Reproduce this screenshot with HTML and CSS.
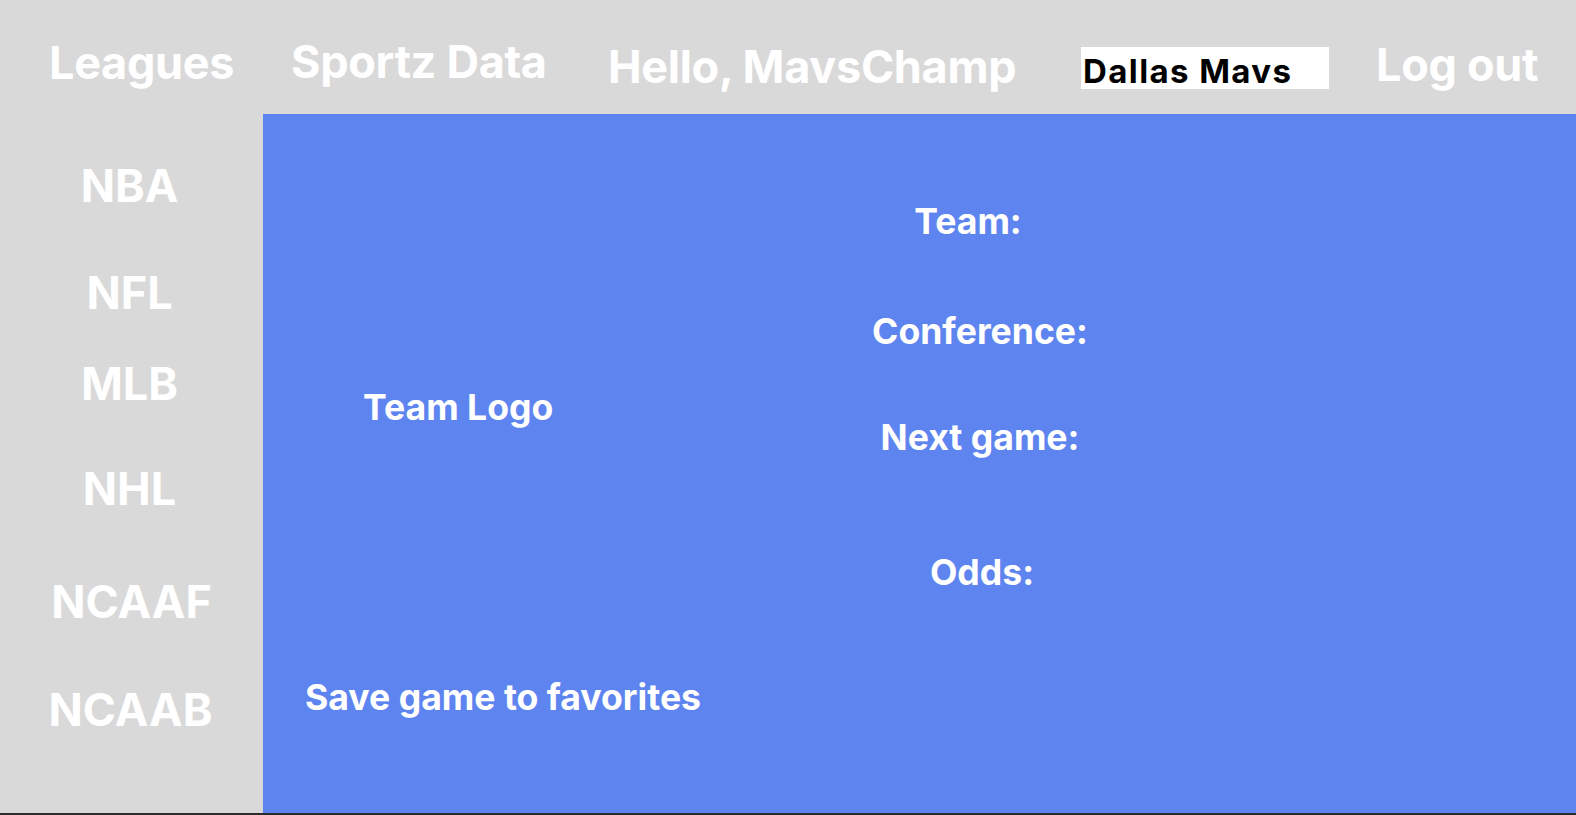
FILE: index.html
```html
<!DOCTYPE html>
<html lang="en">
<head>
<meta charset="utf-8">
<title>Sportz Data</title>
<link rel="stylesheet" href="styles.css">
</head>
<body>
<div class="page">
  <header class="topbar">
    <div class="nav-item nav-leagues">Leagues</div>
    <div class="nav-item nav-brand">Sportz Data</div>
    <div class="nav-item nav-hello">Hello, MavsChamp</div>
    <div class="nav-slot">
      <div class="team-select">Dallas Mavs</div>
    </div>
    <div class="nav-item nav-logout">Log out</div>
  </header>
  <div class="body-row">
    <aside class="sidebar">
      <div class="league league-nba">NBA</div>
      <div class="league league-nfl">NFL</div>
      <div class="league league-mlb">MLB</div>
      <div class="league league-nhl">NHL</div>
      <div class="league league-ncaaf">NCAAF</div>
      <div class="league league-ncaab">NCAAB</div>
    </aside>
    <main class="content">
      <div class="col-left">
        <div class="label team-logo">Team Logo</div>
        <div class="label save-game">Save game to favorites</div>
      </div>
      <div class="col-right">
        <div class="label info-team">Team:</div>
        <div class="label info-conf">Conference:</div>
        <div class="label info-next">Next game:</div>
        <div class="label info-odds">Odds:</div>
      </div>
    </main>
  </div>
</div>
</body>
</html>
```
FILE: styles.css
```css
* { box-sizing: border-box; }
html, body {
  margin: 0;
  padding: 0;
}
body {
  font-family: Inter, "Liberation Sans", sans-serif;
  background: #d9d9d9;
  width: 1576px;
  height: 815px;
  overflow: hidden;
}
.page {
  width: 1576px;
  height: 815px;
  display: flex;
  flex-direction: column;
  border-bottom: 2px solid #2b2b2b;
}
.topbar {
  height: 114px;
  flex: none;
  display: grid;
  grid-template-columns: 242px 317px 473px 295px 1fr;
  padding-left: 49px;
  align-items: start;
  color: #ffffff;
}
.nav-item {
  font-size: 45px;
  line-height: 1;
  font-weight: 700;
  letter-spacing: -0.3px;
  white-space: nowrap;
}
.nav-leagues { margin-top: 40px; }
.nav-brand { margin-top: 39px; }
.nav-hello { margin-top: 44px; }
.nav-logout { margin-top: 42px; }
.nav-slot { margin-top: 47px; }
.team-select {
  width: 248px;
  height: 42px;
  background: #ffffff;
  color: #000000;
  font-size: 33px;
  line-height: 1;
  font-weight: 700;
  letter-spacing: 1.4px;
  padding: 8px 0 0 2px;
  white-space: nowrap;
}
.body-row {
  flex: 1;
  display: flex;
  min-height: 0;
}
.sidebar {
  width: 263px;
  flex: none;
  display: flex;
  flex-direction: column;
  align-items: center;
  color: #ffffff;
}
.league {
  font-size: 45px;
  line-height: 1;
  font-weight: 700;
  margin-left: -4px;
}
.league-nba { margin-top: 49px; }
.league-nfl { margin-top: 62px; }
.league-mlb { margin-top: 46px; }
.league-nhl { margin-top: 60px; }
.league-ncaaf { margin-top: 68px; margin-left: 0; }
.league-ncaab { margin-top: 63px; margin-left: -2px; }
.content {
  flex: 1;
  background: #5e84f0;
  display: flex;
  color: #ffffff;
}
.label {
  font-size: 35.6px;
  line-height: 1;
  font-weight: 700;
  white-space: nowrap;
}
.col-left {
  width: 517px;
  flex: none;
  display: flex;
  flex-direction: column;
  align-items: flex-start;
  padding-left: 42px;
}
.team-logo { margin-top: 276px; margin-left: 58px; }
.save-game { margin-top: 254px; }
.col-right {
  width: 400px;
  flex: none;
  display: flex;
  flex-direction: column;
  align-items: center;
}
.info-team { margin-top: 90px; margin-right: 24px; }
.info-conf { margin-top: 74px; }
.info-next { margin-top: 71px; }
.info-odds { margin-top: 99px; margin-left: 4px; }
```
